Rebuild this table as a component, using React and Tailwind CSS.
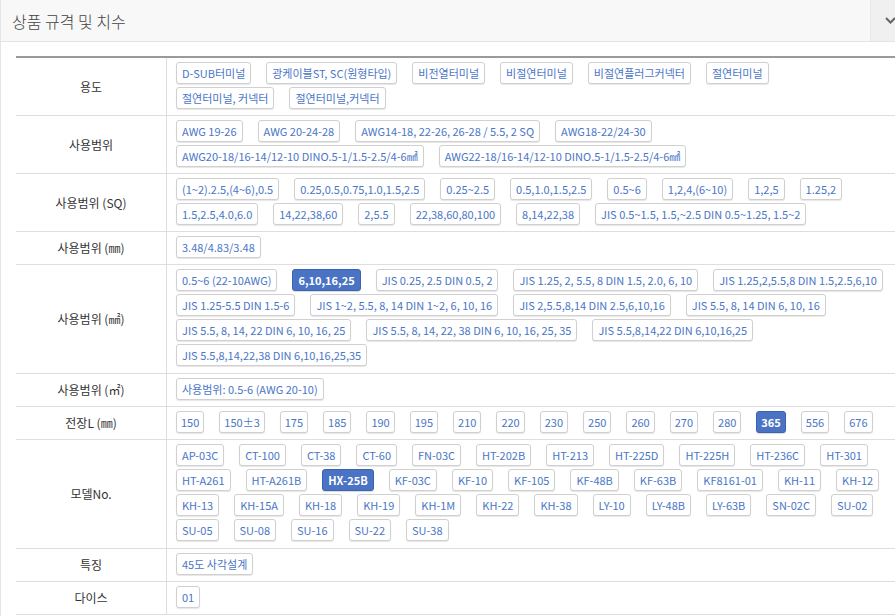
import React from "react";

const rows = [
  {
    label: "용도",
    lines: [
      ["D-SUB터미널", "광케이블ST, SC(원형타입)", "비전열터미널", "비절연터미널", "비절연플러그커넥터", "절연터미널"],
      ["절연터미널, 커넥터", "절연터미널,커넥터"],
    ],
  },
  {
    label: "사용범위",
    lines: [
      ["AWG 19-26", "AWG 20-24-28", "AWG14-18, 22-26, 26-28 / 5.5, 2 SQ", "AWG18-22/24-30"],
      ["AWG20-18/16-14/12-10 DINO.5-1/1.5-2.5/4-6㎟", "AWG22-18/16-14/12-10 DINO.5-1/1.5-2.5/4-6㎟"],
    ],
  },
  {
    label: "사용범위 (SQ)",
    lines: [
      ["(1~2).2.5,(4~6),0.5", "0.25,0.5,0.75,1.0,1.5,2.5", "0.25~2.5", "0.5,1.0,1.5,2.5", "0.5~6", "1,2,4,(6~10)", "1,2,5", "1.25,2"],
      ["1.5,2.5,4.0,6.0", "14,22,38,60", "2,5.5", "22,38,60,80,100", "8,14,22,38", "JIS 0.5~1.5, 1.5,~2.5 DIN 0.5~1.25, 1.5~2"],
    ],
  },
  { label: "사용범위 (㎜)", lines: [["3.48/4.83/3.48"]] },
  {
    label: "사용범위 (㎟)",
    sel: "6,10,16,25",
    lines: [
      ["0.5~6 (22-10AWG)", "6,10,16,25", "JIS 0.25, 2.5 DIN 0.5, 2", "JIS 1.25, 2, 5.5, 8 DIN 1.5, 2.0, 6, 10", "JIS 1.25,2,5.5,8 DIN 1.5,2.5,6,10"],
      ["JIS 1.25-5.5 DIN 1.5-6", "JIS 1~2, 5.5, 8, 14 DIN 1~2, 6, 10, 16", "JIS 2,5.5,8,14 DIN 2.5,6,10,16", "JIS 5.5, 8, 14 DIN 6, 10, 16"],
      ["JIS 5.5, 8, 14, 22 DIN 6, 10, 16, 25", "JIS 5.5, 8, 14, 22, 38 DIN 6, 10, 16, 25, 35", "JIS 5.5,8,14,22 DIN 6,10,16,25"],
      ["JIS 5.5,8,14,22,38 DIN 6,10,16,25,35"],
    ],
  },
  { label: "사용범위 (㎡)", lines: [["사용범위: 0.5-6 (AWG 20-10)"]] },
  {
    label: "전장L (㎜)",
    sel: "365",
    tight: true,
    lines: [["150", "150±3", "175", "185", "190", "195", "210", "220", "230", "250", "260", "270", "280", "365", "556", "676"]],
  },
  {
    label: "모델No.",
    sel: "HX-25B",
    lines: [
      ["AP-03C", "CT-100", "CT-38", "CT-60", "FN-03C", "HT-202B", "HT-213", "HT-225D", "HT-225H", "HT-236C", "HT-301"],
      ["HT-A261", "HT-A261B", "HX-25B", "KF-03C", "KF-10", "KF-105", "KF-48B", "KF-63B", "KF8161-01", "KH-11", "KH-12"],
      ["KH-13", "KH-15A", "KH-18", "KH-19", "KH-1M", "KH-22", "KH-38", "LY-10", "LY-48B", "LY-63B", "SN-02C", "SU-02"],
      ["SU-05", "SU-08", "SU-16", "SU-22", "SU-38"],
    ],
  },
  { label: "특징", lines: [["45도 사각설계"]] },
  { label: "다이스", lines: [["01"]] },
];

const Chip = ({ text, active, tight }) => (
  <span
    className={clsxLite(
      "h-[22px] flex items-center whitespace-nowrap rounded-[3px] border",
      tight ? "px-[4px]" : "px-[5px]",
      active
        ? "border-[#3c63b1] bg-[#4a73c3] text-white font-bold shadow-[0_1px_1px_rgba(0,0,0,0.15)]"
        : "border-[#d0d0d0] bg-white text-[#4a76c6] shadow-[0_1px_1px_rgba(0,0,0,0.1)]"
    )}
  >
    {text}
  </span>
);

function clsxLite(...parts) {
  return parts.filter(Boolean).join(" ");
}

export default function App() {
  return (
    <div className="w-full h-[616px] overflow-hidden bg-white font-['Noto_Sans_CJK_KR','Noto_Sans',sans-serif]">
      <div className="w-[910px] h-full border-l border-[#e5e5e5]">
        {/* header */}
        <div className="flex h-[42px] bg-[#f8f8f8] border-b border-[#e3e3e3]">
          <div className="flex-1 flex items-center pl-[11px] text-[16px] text-[#444] font-light">
            상품 규격 및 치수
          </div>
          <div className="w-[40px] flex items-center justify-center border-l border-[#e8e8e8] bg-[#f0f0f0]">
            <svg width="11" height="7" viewBox="0 0 11 7">
              <polyline points="1,1 5.5,5.5 10,1" fill="none" stroke="#666" strokeWidth="2" />
            </svg>
          </div>
        </div>

        {/* spec table */}
        <div className="pt-[14px] pl-[15px]">
          <div className="border-t-2 border-[#9a9a9a]">
            {rows.map((row) => (
              <div key={row.label} className="flex border-b border-[#dedede]">
                <div className="w-[151px] shrink-0 flex items-center justify-center border-r border-[#dedede] text-[12px] text-[#333]">
                  {row.label}
                </div>
                <div
                  className={clsxLite(
                    "flex-1 flex flex-col gap-y-[3px] pl-[9px] pt-[4px] text-[11px]",
                    row.lines.length > 2 ? "pb-[7px]" : "pb-[6px]"
                  )}
                >
                  {row.lines.map((line, i) => (
                    <div key={i} className="flex gap-x-[15px]">
                      {line.map((t) => (
                        <Chip key={t} text={t} active={t === row.sel} tight={row.tight} />
                      ))}
                    </div>
                  ))}
                </div>
              </div>
            ))}
          </div>
        </div>
      </div>
    </div>
  );
}
